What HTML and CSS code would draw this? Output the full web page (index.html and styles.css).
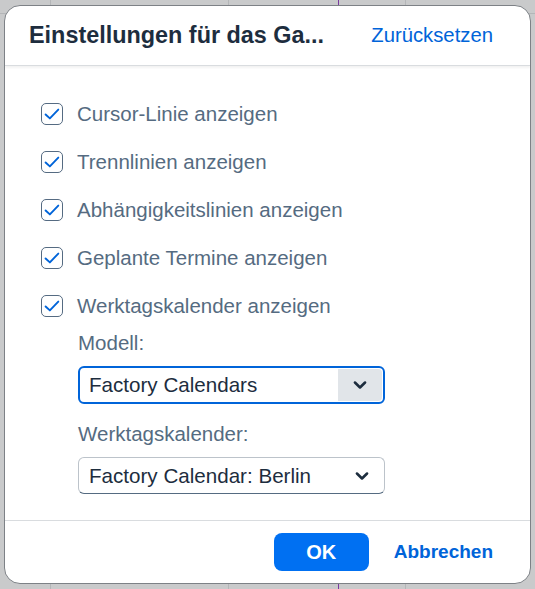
FILE: index.html
```html
<!DOCTYPE html>
<html lang="de">
<head>
<meta charset="utf-8">
<title>Einstellungen</title>
<link rel="stylesheet" href="styles.css">
</head>
<body>
<div class="dialog">
  <header class="dlg-header">
    <h1 class="dlg-title">Einstellungen für das Ga...</h1>
    <a class="link" href="#">Zurücksetzen</a>
  </header>
  <main class="dlg-content">
    <label class="cb-row"><span class="cb"><svg viewBox="0 0 16 16"><path d="M2.3 8.4 L6.1 11.9 L13.6 4.1" fill="none" stroke="#0064d9" stroke-width="1.7" stroke-linecap="round" stroke-linejoin="round"/></svg></span><span class="cb-text">Cursor-Linie anzeigen</span></label>
    <label class="cb-row"><span class="cb"><svg viewBox="0 0 16 16"><path d="M2.3 8.4 L6.1 11.9 L13.6 4.1" fill="none" stroke="#0064d9" stroke-width="1.7" stroke-linecap="round" stroke-linejoin="round"/></svg></span><span class="cb-text">Trennlinien anzeigen</span></label>
    <label class="cb-row"><span class="cb"><svg viewBox="0 0 16 16"><path d="M2.3 8.4 L6.1 11.9 L13.6 4.1" fill="none" stroke="#0064d9" stroke-width="1.7" stroke-linecap="round" stroke-linejoin="round"/></svg></span><span class="cb-text">Abhängigkeitslinien anzeigen</span></label>
    <label class="cb-row"><span class="cb"><svg viewBox="0 0 16 16"><path d="M2.3 8.4 L6.1 11.9 L13.6 4.1" fill="none" stroke="#0064d9" stroke-width="1.7" stroke-linecap="round" stroke-linejoin="round"/></svg></span><span class="cb-text">Geplante Termine anzeigen</span></label>
    <label class="cb-row"><span class="cb"><svg viewBox="0 0 16 16"><path d="M2.3 8.4 L6.1 11.9 L13.6 4.1" fill="none" stroke="#0064d9" stroke-width="1.7" stroke-linecap="round" stroke-linejoin="round"/></svg></span><span class="cb-text">Werktagskalender anzeigen</span></label>
    <div class="sub">
      <div class="field-label">Modell:</div>
      <div class="select select-focus">
        <span class="select-value">Factory Calendars</span>
        <span class="select-btn select-btn-active"><svg viewBox="0 0 16 16"><path d="M3.5 5.8 L8 10.2 L12.5 5.8" fill="none" stroke="#1d2d3e" stroke-width="2.3" stroke-linecap="round" stroke-linejoin="round"/></svg></span>
      </div>
      <div class="field-label">Werktagskalender:</div>
      <div class="select">
        <span class="select-value">Factory Calendar: Berlin</span>
        <span class="select-btn"><svg viewBox="0 0 16 16"><path d="M3.5 5.8 L8 10.2 L12.5 5.8" fill="none" stroke="#1d2d3e" stroke-width="2.3" stroke-linecap="round" stroke-linejoin="round"/></svg></span>
      </div>
    </div>
  </main>
  <footer class="dlg-footer">
    <button class="btn-primary">OK</button>
    <a class="link link-bold" href="#">Abbrechen</a>
  </footer>
</div>
</body>
</html>
```

FILE: styles.css
```css
html, body {
  margin: 0;
  padding: 0;
}
body {
  width: 535px;
  height: 589px;
  overflow: hidden;
  font-family: "Liberation Sans", Arial, sans-serif;
  background-color: #c9cacb;
  background-image:
    linear-gradient(to right, transparent 50px, #b4b6b8 50px, #b4b6b8 51px, transparent 51px),
    linear-gradient(to right, transparent 228px, #b4b6b8 228px, #b4b6b8 229px, transparent 229px),
    linear-gradient(to right, transparent 338px, #7a3aa0 338px, #7a3aa0 339px, transparent 339px),
    linear-gradient(to right, transparent 405px, #b4b6b8 405px, #b4b6b8 406px, transparent 406px),
    linear-gradient(to bottom, transparent 13px, #b4b6b8 13px, #b4b6b8 14px, transparent 14px);
  padding: 5px 4px 0 4px;
  box-sizing: border-box;
}
.dialog {
  width: 527px;
  height: 579px;
  box-sizing: border-box;
  background: #fff;
  border: 1px solid #7d8186;
  border-radius: 16px;
  display: flex;
  flex-direction: column;
  overflow: hidden;
}
.dlg-header {
  height: 60px;
  flex: none;
  box-sizing: border-box;
  display: flex;
  align-items: center;
  justify-content: space-between;
  padding: 0 37px 0 24px;
  border-bottom: 1px solid #d9dcdf;
  box-shadow: 0 2px 2px rgba(0,0,0,0.05);
}
.dlg-title {
  margin: 0;
  font-size: 23.4px;
  font-weight: bold;
  color: #1d2d3e;
}
.link {
  color: #0064d9;
  text-decoration: none;
  font-size: 20.3px;
}
.link-bold {
  font-weight: bold;
  font-size: 19px;
}
.dlg-content {
  flex: 1;
  padding: 24px 0 0 36px;
  display: flex;
  flex-direction: column;
}
.cb-row {
  height: 48px;
  display: flex;
  align-items: center;
  gap: 14px;
}
.cb {
  width: 22px;
  height: 22px;
  box-sizing: border-box;
  border: 1px solid #556b82;
  border-radius: 5px;
  display: flex;
  align-items: center;
  justify-content: center;
  background: #fff;
}
.cb svg {
  width: 18px;
  height: 18px;
}
.cb-text {
  font-size: 20.5px;
  color: #556b81;
}
.sub {
  padding-left: 37px;
  display: flex;
  flex-direction: column;
}
.field-label {
  font-size: 20.5px;
  color: #556b81;
  height: 24px;
  line-height: 24px;
  margin: 1px 0 11px;
}
.select + .field-label {
  margin-top: 18px;
}
.select {
  width: 307px;
  height: 37px;
  box-sizing: border-box;
  border: 1px solid #bcc3ca;
  border-bottom-color: #556b81;
  border-radius: 6px;
  display: flex;
  align-items: center;
  padding: 0 0 0 10px;
}
.select-focus {
  border: 2px solid #0064d9;
  height: 38px;
  padding-left: 9px;
}
.select-value {
  flex: 1;
  font-size: 20.6px;
  color: #1d2d3e;
}
.select-btn {
  width: 44px;
  align-self: stretch;
  display: flex;
  align-items: center;
  justify-content: center;
}
.select-btn svg {
  width: 18px;
  height: 18px;
}
.select-btn-active {
  background: #e1e5e9;
  border-radius: 0 4px 4px 0;
  margin: 1px 1px 1px 0;
}
.dlg-footer {
  height: 63px;
  flex: none;
  box-sizing: border-box;
  border-top: 1px solid #d9dcdf;
  display: flex;
  align-items: center;
  justify-content: flex-end;
  gap: 25px;
  padding: 0 37px 0 0;
}
.btn-primary {
  width: 95px;
  height: 38px;
  border: none;
  border-radius: 8px;
  background: #0070f2;
  color: #fff;
  font-family: inherit;
  font-size: 20px;
  font-weight: bold;
}
```
